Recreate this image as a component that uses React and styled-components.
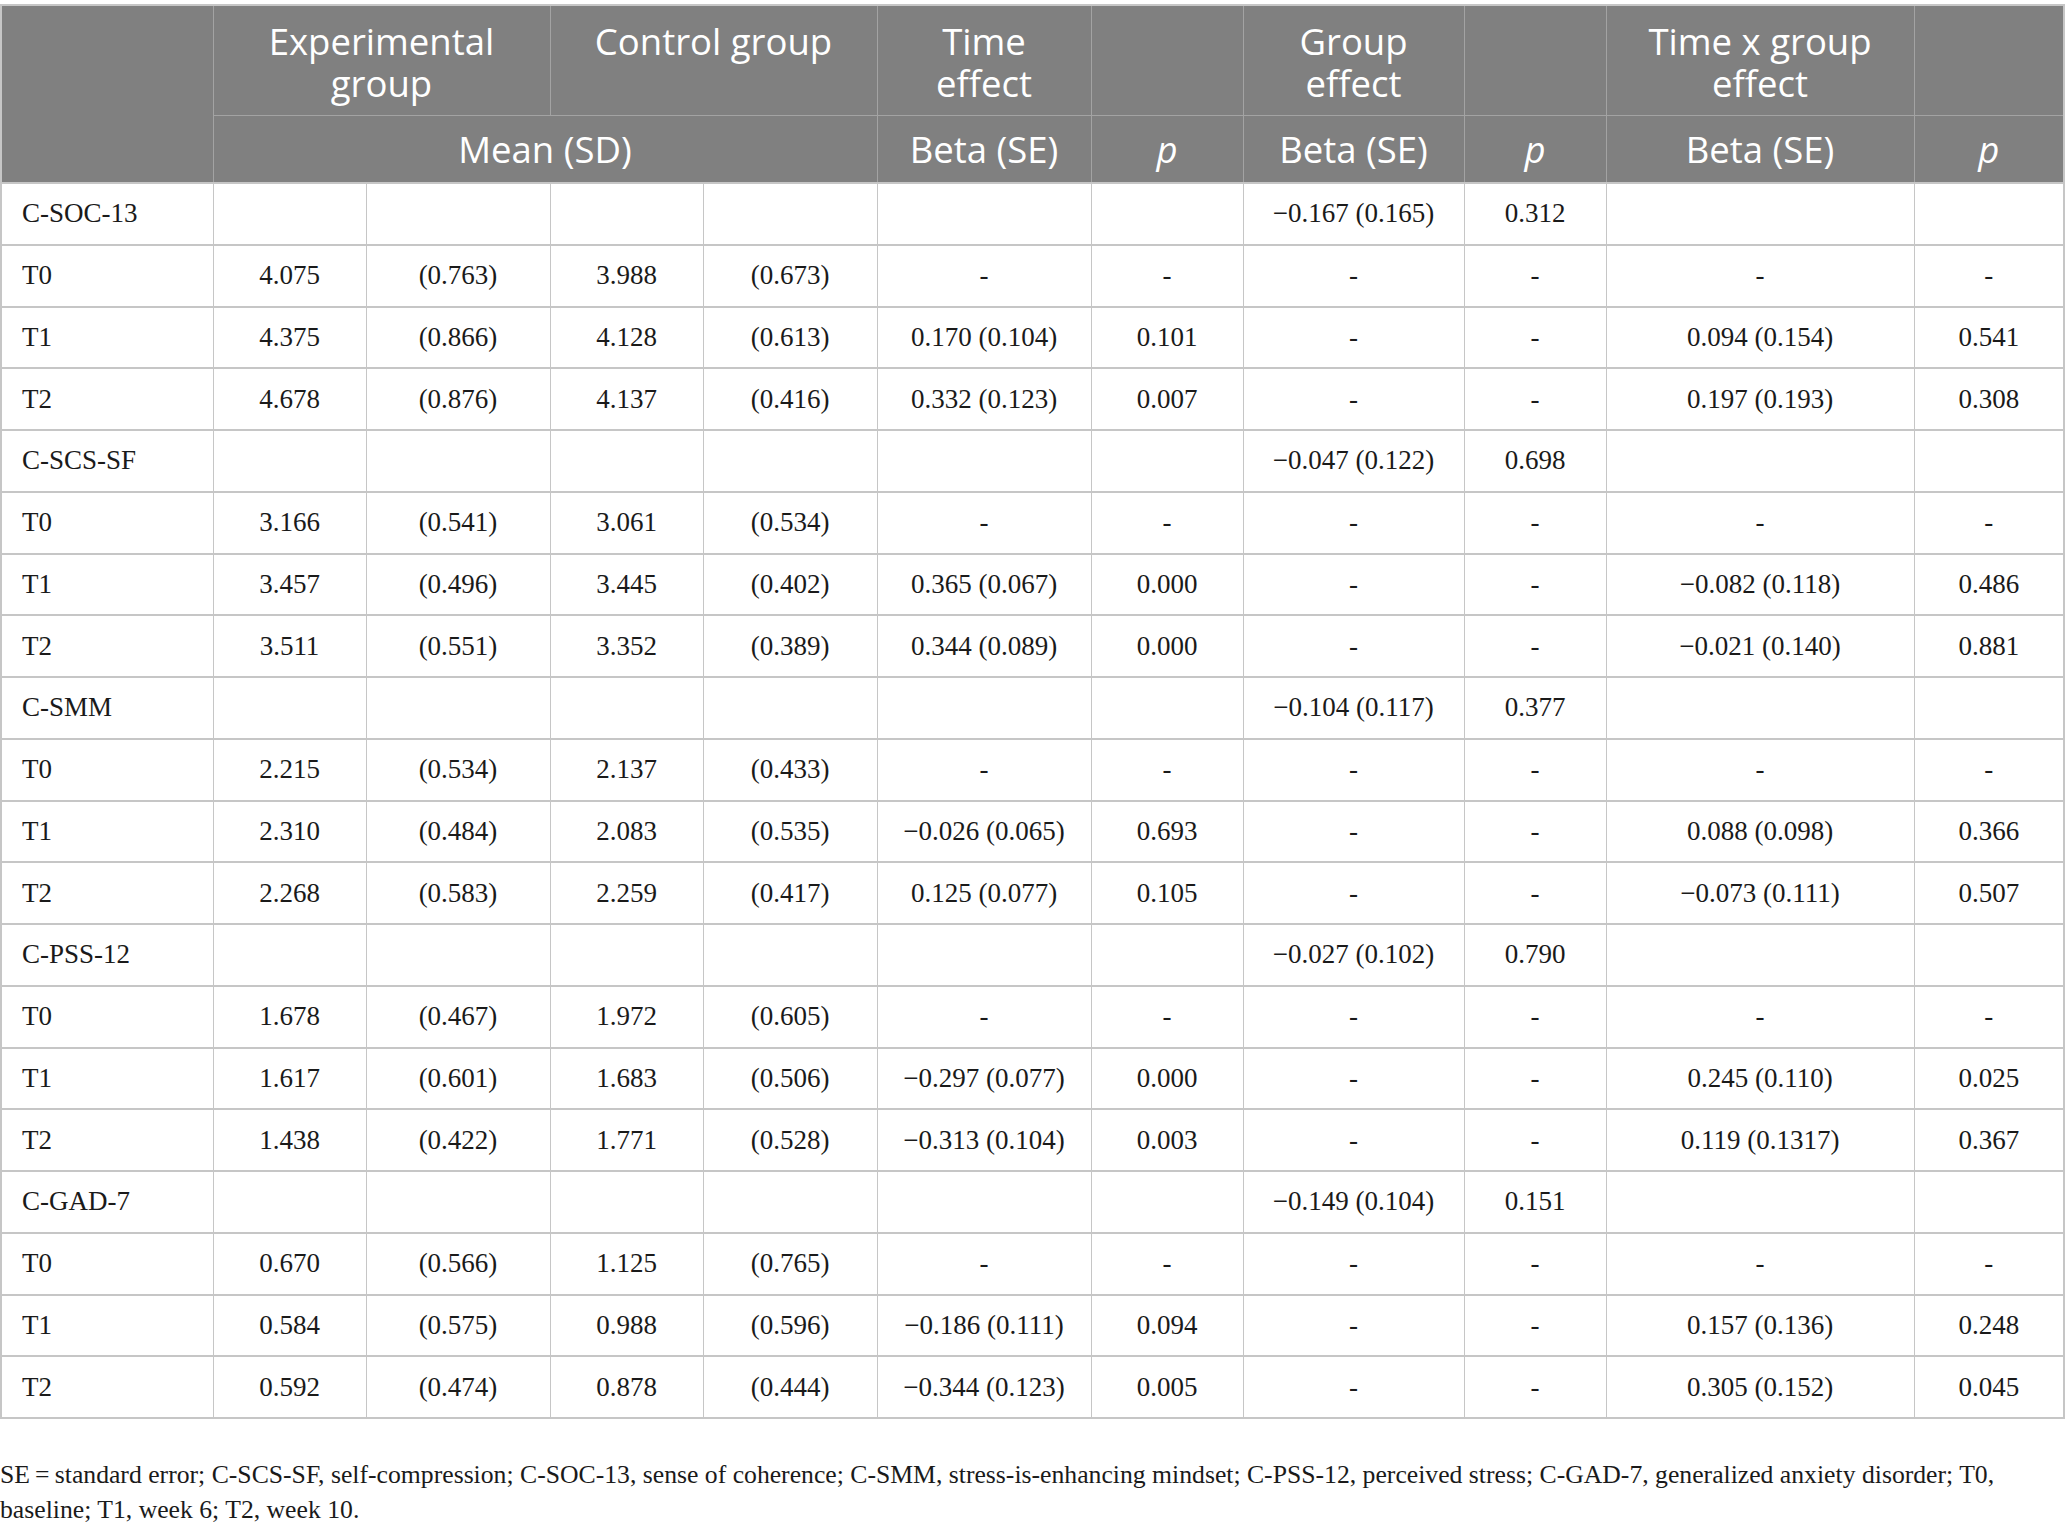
import React from 'react';
import styled, { createGlobalStyle } from 'styled-components';

const headBg = '#808080';
const headLine = '#a3a3a3';
const bodyLine = '#c6c6c6';

const GlobalStyle = createGlobalStyle`
    html, body {
        margin: 0;
        padding: 0;
        background: #ffffff;
    }
`;

const Page = styled.div`
    width: 2066px;
    padding-top: 4px;
    font-family: "Liberation Serif", "Times New Roman", serif;
    color: #1a1a1a;
`;

const Table = styled.table`
    width: 2064px;
    border-collapse: collapse;
    table-layout: fixed;
    border: 2px solid ${bodyLine};
`;

const HeadCell = styled.th`
    background: ${headBg};
    color: #ffffff;
    font-family: "Open Sans", "Noto Sans", sans-serif;
    font-weight: 400;
    font-size: 36.5px;
    line-height: 42px;
    text-align: center;
    vertical-align: ${({ $top }) => ($top ? 'top' : 'middle')};
    padding: ${({ $top }) => ($top ? '14px 6px 0' : '0 6px')};
    height: ${({ $top }) => ($top ? '95px' : '66px')};
    border: 1px solid ${headLine};
    font-style: ${({ $italic }) => ($italic ? 'italic' : 'normal')};
`;

const Row = styled.tr`
    height: 61.75px;
    border-top: 2px solid ${bodyLine};
`;

const Cell = styled.td`
    font-size: 27px;
    text-align: ${({ $left }) => ($left ? 'left' : 'center')};
    padding: ${({ $left }) => ($left ? '0 0 0 20px' : '0 4px')};
    vertical-align: middle;
    border-left: 1px solid ${bodyLine};
    border-right: 1px solid ${bodyLine};
    white-space: nowrap;
`;

const Footnote = styled.p`
    margin: 38px 0 0;
    font-size: 25.7px;
    line-height: 35px;
    color: #1a1a1a;
`;

const widths = [212, 153, 184, 153, 174, 214, 152, 221, 142, 308, 150];

const M = '\u2212';

const note = 'SE\u2009=\u2009standard error; C-SCS-SF, self-compression; C-SOC-13, sense of coherence; C-SMM, stress-is-enhancing mindset; C-PSS-12, perceived stress; C-GAD-7, generalized anxiety disorder; T0, baseline; T1, week 6; T2, week 10.';

const rows = [
    ['C-SOC-13', '', '', '', '', '', '', `${M}0.167 (0.165)`, '0.312', '', ''],
    ['T0', '4.075', '(0.763)', '3.988', '(0.673)', '-', '-', '-', '-', '-', '-'],
    ['T1', '4.375', '(0.866)', '4.128', '(0.613)', '0.170 (0.104)', '0.101', '-', '-', '0.094 (0.154)', '0.541'],
    ['T2', '4.678', '(0.876)', '4.137', '(0.416)', '0.332 (0.123)', '0.007', '-', '-', '0.197 (0.193)', '0.308'],
    ['C-SCS-SF', '', '', '', '', '', '', `${M}0.047 (0.122)`, '0.698', '', ''],
    ['T0', '3.166', '(0.541)', '3.061', '(0.534)', '-', '-', '-', '-', '-', '-'],
    ['T1', '3.457', '(0.496)', '3.445', '(0.402)', '0.365 (0.067)', '0.000', '-', '-', `${M}0.082 (0.118)`, '0.486'],
    ['T2', '3.511', '(0.551)', '3.352', '(0.389)', '0.344 (0.089)', '0.000', '-', '-', `${M}0.021 (0.140)`, '0.881'],
    ['C-SMM', '', '', '', '', '', '', `${M}0.104 (0.117)`, '0.377', '', ''],
    ['T0', '2.215', '(0.534)', '2.137', '(0.433)', '-', '-', '-', '-', '-', '-'],
    ['T1', '2.310', '(0.484)', '2.083', '(0.535)', `${M}0.026 (0.065)`, '0.693', '-', '-', '0.088 (0.098)', '0.366'],
    ['T2', '2.268', '(0.583)', '2.259', '(0.417)', '0.125 (0.077)', '0.105', '-', '-', `${M}0.073 (0.111)`, '0.507'],
    ['C-PSS-12', '', '', '', '', '', '', `${M}0.027 (0.102)`, '0.790', '', ''],
    ['T0', '1.678', '(0.467)', '1.972', '(0.605)', '-', '-', '-', '-', '-', '-'],
    ['T1', '1.617', '(0.601)', '1.683', '(0.506)', `${M}0.297 (0.077)`, '0.000', '-', '-', '0.245 (0.110)', '0.025'],
    ['T2', '1.438', '(0.422)', '1.771', '(0.528)', `${M}0.313 (0.104)`, '0.003', '-', '-', '0.119 (0.1317)', '0.367'],
    ['C-GAD-7', '', '', '', '', '', '', `${M}0.149 (0.104)`, '0.151', '', ''],
    ['T0', '0.670', '(0.566)', '1.125', '(0.765)', '-', '-', '-', '-', '-', '-'],
    ['T1', '0.584', '(0.575)', '0.988', '(0.596)', `${M}0.186 (0.111)`, '0.094', '-', '-', '0.157 (0.136)', '0.248'],
    ['T2', '0.592', '(0.474)', '0.878', '(0.444)', `${M}0.344 (0.123)`, '0.005', '-', '-', '0.305 (0.152)', '0.045'],
];

const App = () => (
    <Page>
        <GlobalStyle/>
        <Table>
            <colgroup>
                {widths.map((w, i) => <col key={i} style={{ width: w }}/>)}
            </colgroup>
            <thead>
                <tr>
                    <HeadCell rowSpan={2}/>
                    <HeadCell $top colSpan={2}>Experimental<br/>group</HeadCell>
                    <HeadCell $top colSpan={2}>Control group</HeadCell>
                    <HeadCell $top>Time<br/>effect</HeadCell>
                    <HeadCell $top/>
                    <HeadCell $top>Group<br/>effect</HeadCell>
                    <HeadCell $top/>
                    <HeadCell $top>Time x group<br/>effect</HeadCell>
                    <HeadCell $top/>
                </tr>
                <tr>
                    <HeadCell colSpan={4}>Mean (SD)</HeadCell>
                    <HeadCell>Beta (SE)</HeadCell>
                    <HeadCell $italic>p</HeadCell>
                    <HeadCell>Beta (SE)</HeadCell>
                    <HeadCell $italic>p</HeadCell>
                    <HeadCell>Beta (SE)</HeadCell>
                    <HeadCell $italic>p</HeadCell>
                </tr>
            </thead>
            <tbody>
                {rows.map((r, i) => (
                    <Row key={i}>
                        {r.map((v, j) => <Cell key={j} $left={j === 0}>{v}</Cell>)}
                    </Row>
                ))}
            </tbody>
        </Table>
        <Footnote>{note}</Footnote>
    </Page>
);

export default App;
